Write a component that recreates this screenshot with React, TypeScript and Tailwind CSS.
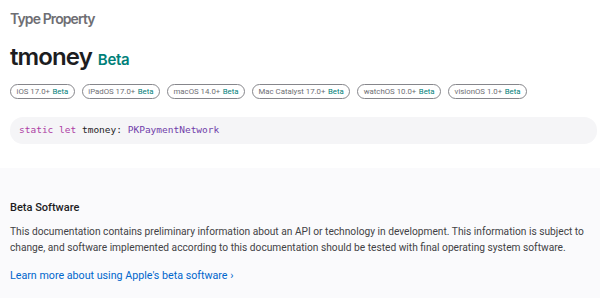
import React from "react";

const badges = [
  "iOS 17.0+",
  "iPadOS 17.0+",
  "macOS 14.0+",
  "Mac Catalyst 17.0+",
  "watchOS 10.0+",
  "visionOS 1.0+",
];

export default function App() {
  return (
    <div className="w-[600px] h-[298px] overflow-hidden bg-white" style={{ fontFamily: "Roboto, 'Noto Sans', sans-serif" }}>
      <div className="pl-[10px] pr-[3px]">
        <div className="pt-[10px] text-[14px] leading-[18px] font-semibold text-[#6e6e73]" style={{ fontFamily: "Inter, sans-serif", letterSpacing: "-0.9px" }}>Type Property</div>
        <div className="mt-[15px] h-[30px] flex items-baseline gap-[6px]" style={{ fontFamily: "Inter, sans-serif" }}>
          <span className="text-[24px] leading-[28px] font-semibold text-[#1d1d1f] tracking-[-0.9px]">tmoney</span>
          <span className="text-[15px] leading-[20px] font-semibold text-[#008079] tracking-[-0.3px]">Beta</span>
        </div>
        <div className="mt-[11px] flex gap-[7px]">
          {badges.map((b) => (
            <span key={b} className="h-[15px] px-[5.5px] flex items-center rounded-full border border-[#86868b] text-[7.8px] text-[#6e6e73] whitespace-nowrap">
              {b}
              <span className="ml-[2.5px] text-[#008079]">Beta</span>
            </span>
          ))}
        </div>
        <div className="mt-[18px] h-[27px] rounded-[13px] bg-[#f5f5f7] flex items-center pl-[9px] text-[9.5px]" style={{ fontFamily: "'DejaVu Sans Mono', monospace" }}>
          <span className="text-[#ad3da4]">static</span>
          <span>&nbsp;</span>
          <span className="text-[#ad3da4]">let</span>
          <span className="text-[#1d1d1f]">&nbsp;tmoney:&nbsp;</span>
          <span className="text-[#703daa]">PKPaymentNetwork</span>
        </div>
      </div>
      <div className="mt-[24px] bg-[#fafafc] h-[200px] px-[10px] pt-[32px]">
        <div className="text-[11px] leading-[16px] font-medium text-[#1d1d1f]">Beta Software</div>
        <p className="mt-[8px] text-[10.2px] leading-[15.5px] text-[#424245]">
          This documentation contains preliminary information about an API or technology in development. This information is subject to change, and software implemented according to this documentation should be tested with final operating system software.
        </p>
        <a className="block mt-[13px] text-[10.7px] leading-[16px] text-[#0066cc]">Learn more about using Apple's beta software ›</a>
      </div>
    </div>
  );
}
